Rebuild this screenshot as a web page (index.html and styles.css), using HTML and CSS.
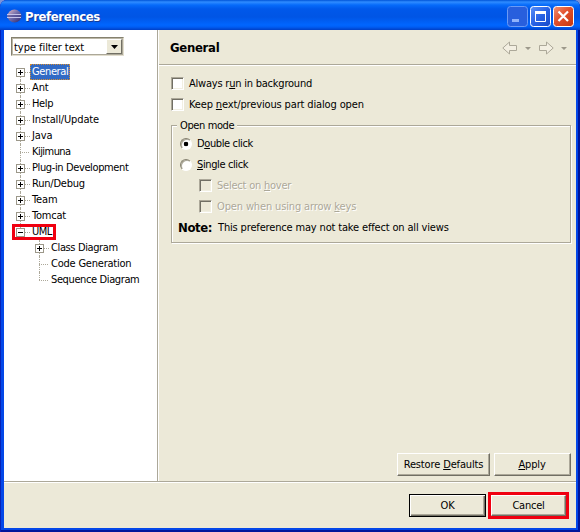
FILE: index.html
```html
<!DOCTYPE html>
<html lang="en">
<head>
<meta charset="utf-8">
<title>Preferences</title>
<link rel="stylesheet" href="styles.css">
</head>
<body>
<div class="window">
  <header class="titlebar">
    <svg class="logo" width="15" height="14" viewBox="0 0 15 14"><defs><linearGradient id="g" x2="1" y2="1"><stop offset="0" stop-color="#e4b9c0"/><stop offset=".45" stop-color="#736fac"/><stop offset="1" stop-color="#29256d"/></linearGradient></defs><ellipse cx="7.5" cy="7" rx="7" ry="6.5" fill="url(#g)"/><path d="M0 5.5H14M0 8.5H14" stroke="#c5c3ea"/><path d="M1 7H14" stroke="#4b478d"/></svg>
    <h1>Preferences</h1>
    <div class="controls">
      <svg class="min" width="21" height="21" viewBox="0 0 21 21"><rect x=".5" y=".5" width="20" height="20" rx="3" fill="#285fdd" stroke="#6b9af5"/><path d="M5 14.5H12" stroke="#8fb2fb" stroke-width="3"/></svg>
      <svg width="21" height="21" viewBox="0 0 21 21"><defs><linearGradient id="b" x2="1" y2="1"><stop offset="0" stop-color="#5b91f7"/><stop offset=".5" stop-color="#2862e5"/><stop offset="1" stop-color="#1749c8"/></linearGradient></defs><rect x=".5" y=".5" width="20" height="20" rx="3" fill="url(#b)" stroke="#fff"/><path d="M5.5 6V15.5H15.5V6" fill="none" stroke="#fff"/><path d="M5 6.5H16" stroke="#fff" stroke-width="3"/></svg>
      <svg width="21" height="21" viewBox="0 0 21 21"><defs><linearGradient id="r" x2="1" y2="1"><stop offset="0" stop-color="#f09376"/><stop offset=".45" stop-color="#e2502c"/><stop offset="1" stop-color="#c4360e"/></linearGradient></defs><rect x=".5" y=".5" width="20" height="20" rx="3" fill="url(#r)" stroke="#fff"/><path d="M5.5 5.5L15 15M15 5.5L5.5 15" stroke="#fff" stroke-width="2.2"/></svg>
    </div>
  </header>
  <div class="main">
    <aside class="sidebar">
      <div class="combo"><span class="t filter">type filter text</span><span class="drop"><svg width="7" height="4" viewBox="0 0 7 4"><path d="M0 0H7L3.5 4Z"/></svg></span></div>
      <ul class="tree">
        <li class="row"><i class="box plus"></i><span class="t tight selected">General</span></li>
        <li class="row"><i class="box plus"></i><span class="t">Ant</span></li>
        <li class="row"><i class="box plus"></i><span class="t tight">Help</span></li>
        <li class="row"><i class="box plus"></i><span class="t">Install/Update</span></li>
        <li class="row"><i class="box plus"></i><span class="t">Java</span></li>
        <li class="row"><i class="leaf"></i><span class="t tighter">Kijimuna</span></li>
        <li class="row"><i class="box plus"></i><span class="t tight">Plug-in Development</span></li>
        <li class="row"><i class="box plus"></i><span class="t snug">Run/Debug</span></li>
        <li class="row"><i class="box plus"></i><span class="t">Team</span></li>
        <li class="row"><i class="box plus"></i><span class="t snug">Tomcat</span></li>
        <li class="row uml"><i class="box"></i><span class="t tighter">UML</span></li>
        <li class="row child"><i class="box plus"></i><span class="t tight">Class Diagram</span></li>
        <li class="row child"><i class="leaf"></i><span class="t snug">Code Generation</span></li>
        <li class="row child last"><i class="leaf"></i><span class="t tight">Sequence Diagram</span></li>
      </ul>
    </aside>
    <section class="page">
      <div class="head"><h2>General</h2>
        <svg width="66" height="14" viewBox="0 0 66 14"><g fill="#f3efe2" stroke="#aca899"><path d="M.8 7L7.5 1V4.500H14.500V9.500H7.500V13Z"/><path d="M51.200 7L44.500 1V4.500H37.500V9.500H44.500V13Z"/></g><path d="M23 6H29L26 9ZM59 6H65L62 9Z" fill="#9d998b"/></svg>
      </div>
      <div class="content">
        <div class="option"><i class="check"></i><span class="t snug">Always r<u>u</u>n in background</span></div>
        <div class="option"><i class="check"></i><span class="t">Keep <u>n</u>ext/previous part dialog open</span></div>
        <div class="group">
          <span class="t tight legend">Open mode</span>
          <div class="option"><i class="radio on"></i><span class="t tight">D<u>o</u>uble click</span></div>
          <div class="option"><i class="radio"></i><span class="t tight"><u>S</u>ingle click</span></div>
          <div class="option off"><i class="check"></i><span class="t snug">Select on <u>h</u>over</span></div>
          <div class="option off"><i class="check"></i><span class="t">Open when using arrow <u>k</u>eys</span></div>
          <div class="note"><b>Note:</b><span class="t">This preference may not take effect on all views</span></div>
        </div>
      </div>
      <div class="actions"><button class="wide"><span class="t">Restore <u>D</u>efaults</span></button><button><span class="t">&#8202;<u>A</u>pply&#8201;</span></button></div>
    </section>
  </div>
  <footer class="footer"><button class="ok"><span class="t">OK</span></button><div class="mark"><button><span class="t snug">Cancel</span></button></div></footer>
</div>
</body>
</html>
```
FILE: styles.css
```css
*, *::before, *::after { box-sizing: border-box; }
body { margin: 0; background: #7b93d9; font: 11px/16px "DejaVu Sans Condensed", "DejaVu Sans", sans-serif; font-stretch: condensed; color: #000; }
h1, h2, ul { margin: 0; padding: 0; list-style: none; }
i { display: block; flex: none; }
u { text-decoration: underline; text-underline-offset: 1px; text-decoration-thickness: 1px; text-decoration-skip-ink: none; }
.t { white-space: nowrap; letter-spacing: -0.14px; }
.snug { letter-spacing: -0.22px; }
.tight { letter-spacing: -0.38px; }
.tighter { letter-spacing: -0.55px; }
.window { width: 580px; height: 532px; display: flex; flex-direction: column; padding: 0 4px 4px; border-radius: 7px 7px 0 0; background: #0447e8; box-shadow: inset 1px 0 #0722b8, inset -2px -2px #00169b; overflow: hidden; }
.titlebar { height: 30px; flex: none; margin: 0 -4px; padding: 3px 6px 0 7px; display: flex; align-items: center; background: linear-gradient(#0054d8 0, #2f8cff 2px, #066bfa 5px, #0058ea 9px, #0055e5 17px, #0066ff 25px, #005df4 27px, #003fc5 30px); }
.titlebar h1 { margin-left: 3px; font: bold 13px/18px "DejaVu Sans Condensed", sans-serif; letter-spacing: -0.4px; color: #fff; text-shadow: 1px 1px #153a94; }
.logo { margin-top: -1px; }
.controls { margin-left: auto; display: flex; gap: 2px; }
.main { height: 451px; flex: none; display: flex; }
.sidebar { width: 154px; flex: none; padding: 7px 0 0 7px; background: #fff; border-right: 1px solid #aca899; }
.combo { width: 113px; height: 19px; display: flex; border: 1px solid; border-color: #85816f #e2decf #e2decf #85816f; box-shadow: inset 1px 1px #bbb7a7, inset -1px -1px #aca899; padding: 1px; }
.filter { flex: 1; line-height: 17px; padding-left: 1px; letter-spacing: -0.05px; }
.drop { width: 16px; height: 15px; background: #ece9d8; border: 1px solid; border-color: #fff #716f64 #716f64 #fff; display: flex; align-items: center; justify-content: center; }
.tree { margin: 8px 0 0 5px; }
.row { position: relative; height: 16px; display: flex; align-items: center; }
.row::before { content: ""; position: absolute; left: 4px; top: 0; bottom: 0; border-left: 1px dotted #aca899; }
.row:first-child::before { top: 8px; }
.uml::before, .last::before { bottom: 8px; }
.row .t { margin-left: 5px; padding: 0 2px; }
.row i { position: relative; }
.box { width: 9px; height: 9px; border: 1px solid #9c988a; background: linear-gradient(#000, #000) center/5px 1px no-repeat #fff; }
.plus { background: linear-gradient(#000, #000) center/5px 1px no-repeat, linear-gradient(#000, #000) center/1px 5px no-repeat, #fff; }
.box::after { content: ""; position: absolute; left: 8px; top: 3px; width: 5px; border-top: 1px dotted #aca899; }
.leaf { width: 9px; height: 1px; }
.leaf::after { content: ""; position: absolute; left: 4px; top: 0; width: 9px; border-top: 1px dotted #aca899; }
.row .selected { height: 16px; background: #316ac5; color: #fff; outline: 1px dotted #d58c32; outline-offset: -1px; }
.child { margin-left: 19px; }
.uml::after { content: ""; position: absolute; left: -4px; top: 0; width: 44px; height: 16px; border: 3px solid #f00010; }
.page { flex: 1; display: flex; flex-direction: column; background: #ece9d8; border-left: 1px solid #fff; }
.head { height: 36px; flex: none; display: flex; align-items: center; justify-content: space-between; padding: 1px 8px 0 11px; border-bottom: 1px solid #fff; box-shadow: inset 0 -1px #aca899; }
.head h2 { font: bold 13px/18px "DejaVu Sans Condensed", sans-serif; letter-spacing: -0.3px; }
.content { padding: 7px 5px 0 12px; }
.option { height: 21px; display: flex; align-items: center; gap: 5px; }
.check { width: 13px; height: 13px; background: #fff; border: 1px solid; border-color: #aca899 #fff #fff #aca899; box-shadow: inset 1px 1px #716f64, inset -1px -1px #f1efe2; }
.radio { width: 12px; height: 12px; border-radius: 50%; background: #fff; border: 1px solid; border-color: #85816f #fff #fff #85816f; box-shadow: inset 1px 1px #aca899; }
.radio.on { background: radial-gradient(circle at 50% 50%, #000 0 2px, #fff 2.6px); }
.group { position: relative; width: 400px; height: 118px; margin-top: 10px; padding: 7px 0 0 8px; border: 1px solid #aca899; box-shadow: 1px 1px #fff, inset 1px 1px #fff; }
.legend { position: absolute; left: 5px; top: -8px; padding: 0 3px; background: #ece9d8; }
.off { padding-left: 19px; color: #aca899; text-shadow: 1px 1px #fff; }
.off .check { background: #ece9d8; }
.note { display: flex; align-items: center; gap: 6px; height: 22px; margin-left: -2px; }
.note b { font-size: 13px; letter-spacing: -0.4px; }
.note .t { letter-spacing: -0.16px; }
button { width: 77px; height: 23px; padding: 0; font: inherit; background: #ece9d8; border: 1px solid; border-color: #fff #716f64 #716f64 #fff; box-shadow: inset -1px -1px #aca899; line-height: 16px; }
.actions { margin-top: auto; padding: 0 5px 5px 0; display: flex; justify-content: flex-end; gap: 4px; }
.actions .wide { width: 93px; }
.footer { flex: 1; display: flex; align-items: flex-start; justify-content: flex-end; gap: 2px; background: #ece9d8; border-top: 1px solid #aca899; box-shadow: inset 0 1px #fff; padding: 10px 7px 0 0; }
.ok { margin-top: 2px; border-color: #000; box-shadow: inset 1px 1px #fff, inset -1px -1px #716f64, inset -2px -2px #aca899; }
.mark { width: 81px; height: 27px; border: 3px solid #f00010; display: flex; }
.mark button { width: 75px; height: 21px; }
```
